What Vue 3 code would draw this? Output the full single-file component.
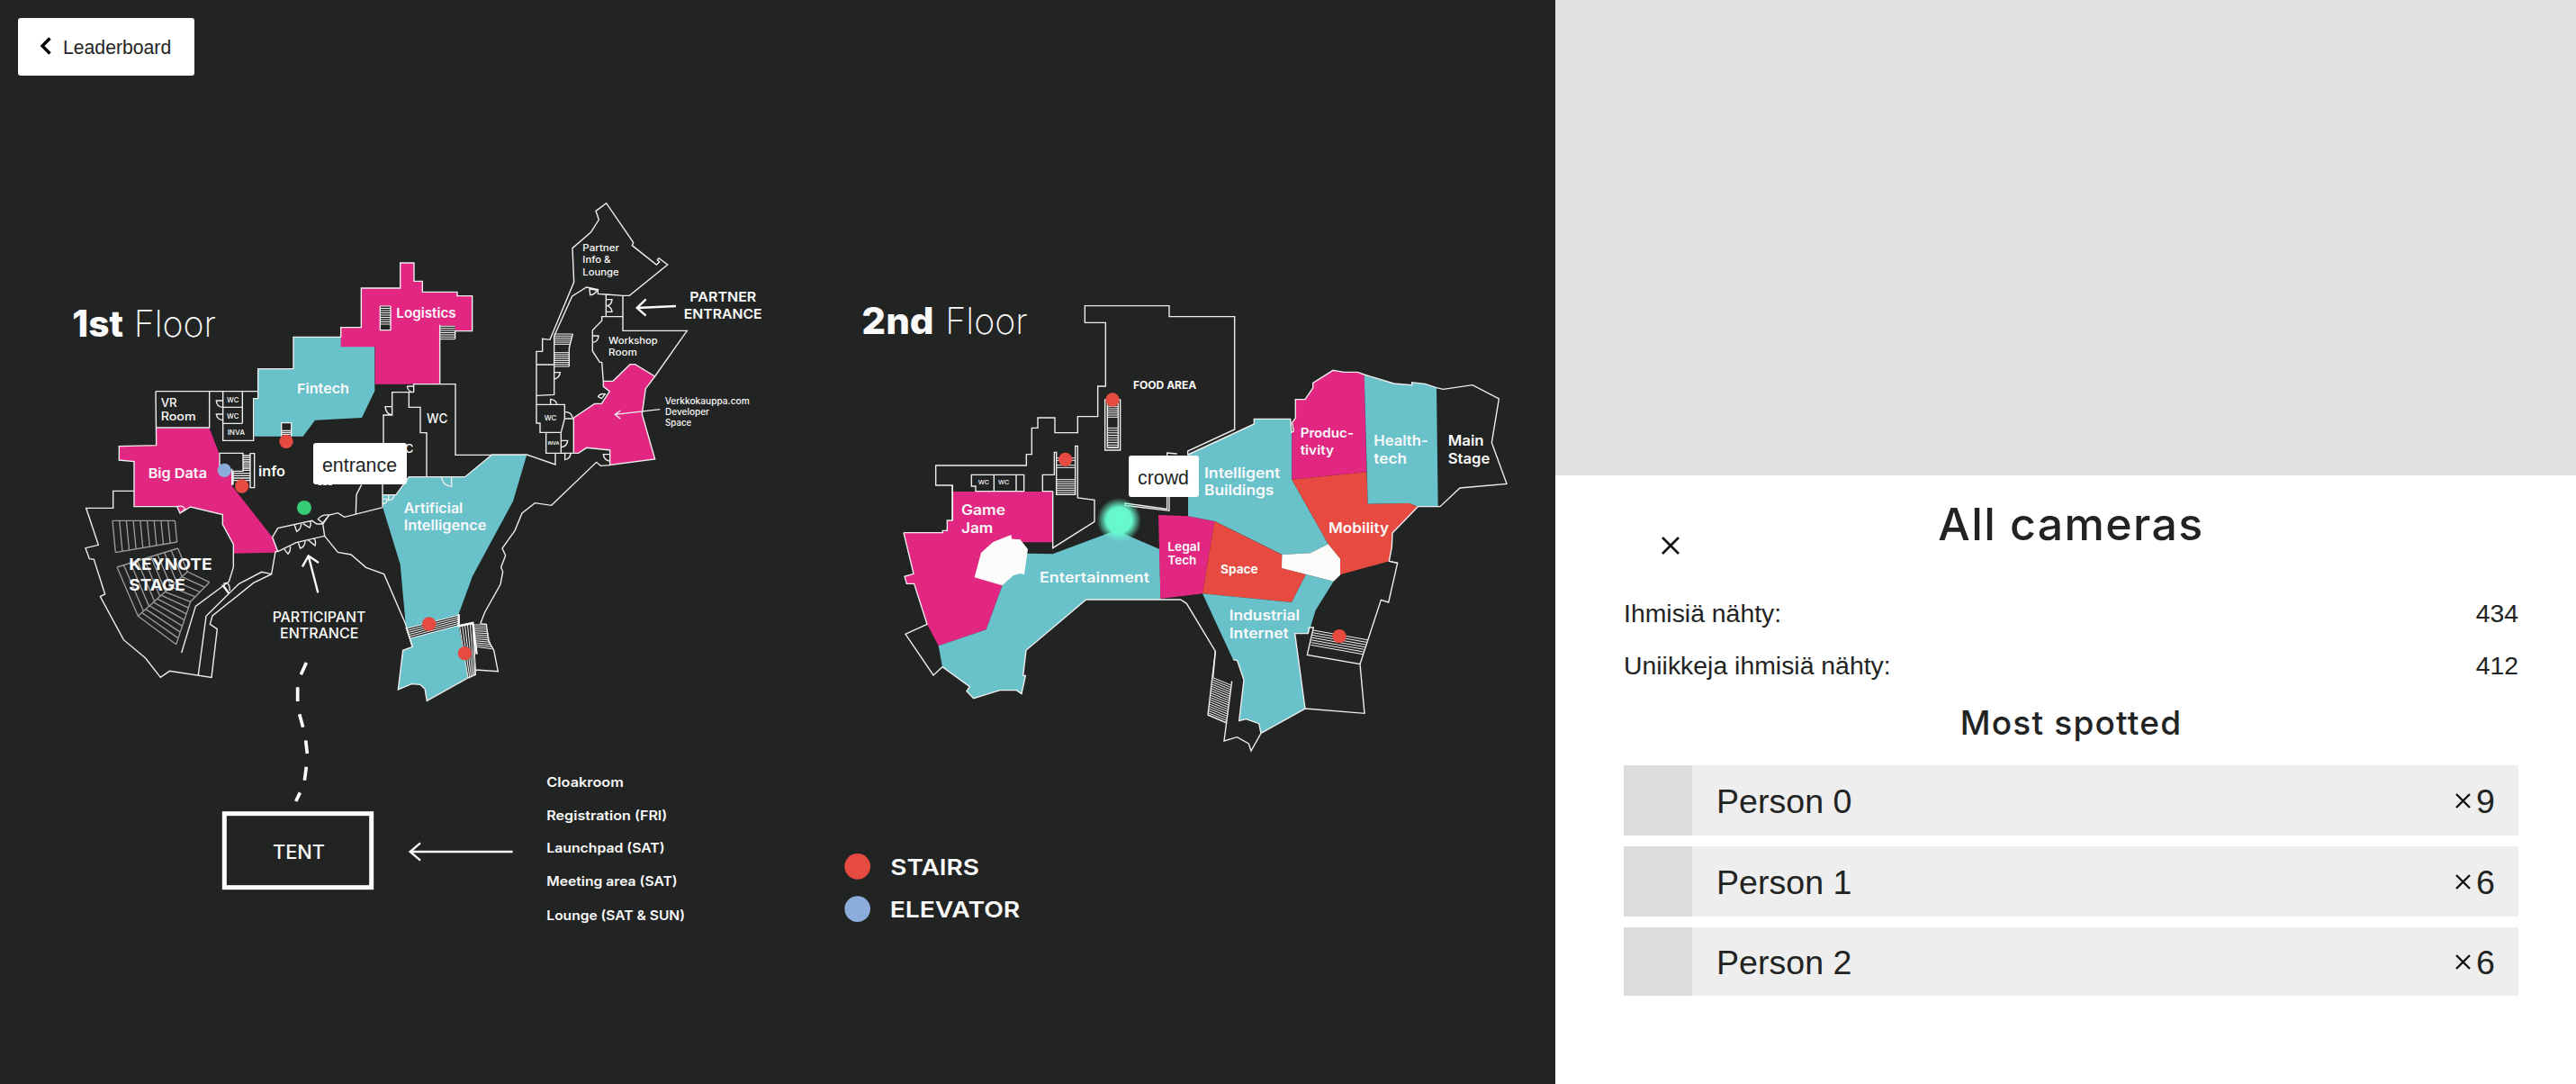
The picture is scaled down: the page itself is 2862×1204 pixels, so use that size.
<template>
  <div class="app">
    <section class="map-pane">
      <svg class="map" viewBox="0 0 5184 3612" xmlns="http://www.w3.org/2000/svg">
        <defs>
          <radialGradient id="glow">
            <stop offset="0" stop-color="#68fcd0" />
            <stop offset="0.58" stop-color="#68fcd0" stop-opacity="0.97" />
            <stop offset="0.8" stop-color="#68fcd0" stop-opacity="0.45" />
            <stop offset="1" stop-color="#68fcd0" stop-opacity="0" />
          </radialGradient>
        </defs>

        <g v-for="zone in zones" :key="zone.name" :transform="`translate(${zone.x} ${zone.y})`">
          <polygon v-for="(area, i) in zone.areas" :key="i" :points="area[1]" :class="area[0]" />
        </g>

        <g v-for="zone in zones" :key="zone.name" :transform="`translate(${zone.x} ${zone.y})`">
          <path class="hatch" :class="zone.hatchClass" :d="zone.hatches.map(hatch).join('')" />
          <path class="wall" :d="zone.walls" />
          <path v-if="zone.thick" class="thick" :d="zone.thick" />
          <circle v-for="(dot, i) in zone.dots" :key="i" :class="dot[0]" :cx="dot[1]" :cy="dot[2]" :r="dot[3]" />
        </g>

        <!-- テント -->
        <path class="dashes" d="M1021 2208L1003 2248M992 2290V2337M998 2380L1010 2423M1019 2467L1024 2511M1021 2555L1015 2600M1000 2641L986 2670" />
        <rect class="tent" x="748" y="2711" width="490" height="246" />
        <path class="thick" d="M1709 2838H1367M1401 2809L1367 2838L1401 2867" />

        <g v-for="zone in zones" :key="zone.name" :transform="`translate(${zone.x} ${zone.y})`">
          <text
            v-for="(label, i) in zone.labels"
            :key="i"
            :class="label[5] || 'semi'"
            :x="label[1]"
            :y="label[2]"
            :textLength="label[3]"
            :font-size="label[4]"
            lengthAdjust="spacingAndGlyphs"
          >{{ label[0] }}</text>
        </g>

        <circle cx="3730" cy="1733" r="74" fill="url(#glow)" />
      </svg>

      <button class="back-button">
        <svg width="14" height="20" viewBox="0 0 14 20">
          <path d="M11.5 1.5L3 10L11.5 18.5" fill="none" stroke="#000" stroke-width="3.4" />
        </svg>
        <span>Leaderboard</span>
      </button>
      <div class="camera-label entrance">entrance</div>
      <div class="camera-label crowd">crowd</div>
    </section>

    <aside class="side">
      <div class="video"></div>
      <div class="panel">
        <div class="panel-header">
          <button class="close-button">
            <svg width="20" height="20" viewBox="0 0 20 20">
              <path d="M1 1L19 19M19 1L1 19" stroke="#111" stroke-width="2.6" />
            </svg>
          </button>
          <h1>All cameras</h1>
        </div>
        <div v-for="stat in stats" :key="stat.label" class="stat">
          <span>{{ stat.label }}</span>
          <span>{{ stat.value }}</span>
        </div>
        <h2>Most spotted</h2>
        <ul class="people">
          <li v-for="person in people" :key="person.name">
            <div class="avatar"></div>
            <span class="name">{{ person.name }}</span>
            <svg width="17" height="17" viewBox="0 0 17 17">
              <path d="M1 1L16 16M16 1L1 16" stroke="#111" stroke-width="2.4" />
            </svg>
            <span class="count">{{ person.count }}</span>
          </li>
        </ul>
      </div>
    </aside>
  </div>
</template>

<script setup>
import { ref } from 'vue'

const stats = ref([
  { label: 'Ihmisiä nähty:', value: 434 },
  { label: 'Uniikkeja ihmisiä nähty:', value: 412 }
])

const people = ref([
  { name: 'Person 0', count: 9 },
  { name: 'Person 1', count: 6 },
  { name: 'Person 2', count: 6 }
])

// Lines between edge a-b and edge c-d, n steps
const hatch = ([ax, ay, bx, by, cx, cy, dx, dy, n]) => {
  let d = ''
  for (let i = 0; i <= n; i++) {
    const t = i / n
    d += `M${ax + (bx - ax) * t} ${ay + (by - ay) * t}L${cx + (dx - cx) * t} ${cy + (dy - cy) * t}`
  }
  return d
}

// areas: [class, points]
// hatches: [ax, ay, bx, by, cx, cy, dx, dy, steps]
// dots: [class, x, y, r]
// labels: [text, x, y, width, size, class]
const zones = [
  {
    name: 'keynote',
    x: 240,
    y: 1200,
    hatchClass: 'seats',
    areas: [
      ['teal', '738,-77 897,-77 897,-45 1009,-45 1009,103 966,192 810,200 770,254 607,254 607,128 620,128 620,29 738,29'],
      ['pink', '281,227 458,227 490,310 492,365 532,365 532,418 668,590 686,638 678,641 538,644 538,614 502,548 502,515 395,489 360,510 350,488 207,488 207,338 157,333 157,287 281,284'],
      ['dark', '698,209 731,209 731,254 698,254']
    ],
    hatches: [
      [135, 535, 343, 535, 145, 641, 350, 606, 9],
      [135, 535, 145, 641, 343, 535, 350, 606, 1],
      [150, 690, 353, 627, 220, 853, 385, 705, 9],
      [150, 690, 220, 853, 353, 627, 385, 705, 1],
      [385, 705, 310, 772, 458, 740, 395, 805, 4],
      [310, 772, 220, 853, 395, 805, 347, 947, 7],
      [458, 740, 395, 805, 395, 805, 347, 947, 1]
    ],
    walls:
      'M897 -77H738V29H620V128H605V268H503V104M279 104H620M279 225H458V104M279 104L281 284L157 287V333L207 338V488H350L360 510L395 489L502 515V548L538 614V690L523 738' +
      'M207 436H137V493H47L88 616L45 626L58 662L73 664L110 780L94 788L172 932L245 993L295 1057L325 1036L465 1057L484 896L460 880L468 852L605 742L665 713L678 638H686L668 590L686 560L800 535L816 546H836L857 516L886 509L908 523L1035 491' +
      'M523 738L412 820L365 975M523 778L447 853L421 1048M523 778L557 745L632 706L665 713M500 748L523 778' +
      'M836 546L842 586L747 608L686 638M842 586L886 640L930 648L980 691L1040 713L1112 880L1135 957' +
      'M568 104V211M503 157H568M503 211H568M503 135H481Q482 156 503 157M503 200Q483 198 481 180H503' +
      'M698 254V209H731V254M698 235H731M698 241H731M698 247H731' +
      'M492 365V310H570V370H537V415M533 362V418M594 311H608V425H594ZM570 318H593M570 325H593M570 332H593M570 339H593M570 346H593M570 353H593M570 360H593M570 367H593M537 377H593M537 385H593M537 393H593M537 401H593' +
      'M742 550L749 571Q762 565 764 546M770 545L792 558Q798 548 794 538M820 530Q832 513 857 516L836 543ZM707 629L720 646Q730 635 727 621M754 608L761 627Q776 622 777 603M788 600L810 618Q814 605 808 596' +
      'M352 488Q370 482 377 497L360 510M505 745Q525 735 526 768M946 512L948 448L965 415M821 415h12m4 0h13m4 0h13',
    thick: 'M820 775L788 652M768 688L788 652L822 675M503 750L522 776',
    dots: [
      ['red', 714, 271, 23],
      ['blue', 508, 367, 23],
      ['red', 566, 420, 23],
      ['green', 774, 492, 24]
    ],
    labels: [
      ['VR', 296, 155, 54, 38, 'medium'],
      ['Room', 296, 200, 117, 38, 'medium'],
      ['WC', 516, 140, 40, 24, 'medium'],
      ['WC', 516, 195, 40, 24, 'medium'],
      ['INVA', 518, 249, 58, 23, 'medium'],
      ['Fintech', 750, 110, 174, 45],
      ['Big Data', 254, 394, 196, 45],
      ['info', 621, 387, 90, 45],
      ['KEYNOTE', 190, 698, 277, 52, 'bold'],
      ['STAGE', 190, 768, 187, 52, 'bold'],
      ['PARTICIPANT', 668, 872, 311, 46, 'medium'],
      ['ENTRANCE', 693, 928, 262, 46, 'medium']
    ]
  },
  {
    name: 'logistics',
    x: 1080,
    y: 810,
    areas: [
      ['pink', '56,281 124,281 124,150 254,150 254,66 300,66 300,127 328,127 328,163 444,163 444,176 494,176 494,293 386,293 386,470 170,470 170,346 56,346'],
      ['dark', '187,210 222,210 222,290 187,290'],
      ['dark', '386,275 437,275 437,320 386,320']
    ],
    hatches: [
      [187, 210, 187, 270, 222, 210, 222, 270, 8],
      [386, 277, 386, 320, 437, 277, 437, 320, 6]
    ],
    walls:
      'M56 313V281H124V150H254V66H300V127H328V163H444V176H494V293H437V320M386 272V470M187 210V290H222V210' +
      'M299 497V470H438V706H560M299 497H227V573H198V780M283 497V547H321V632H342V778' +
      'M277 477Q280 497 299 497M277 477H299M227 545H204Q206 570 227 573',
    dots: [],
    labels: [
      ['Logistics', 241, 248, 199, 45],
      ['WC', 342, 601, 70, 43, 'medium'],
      ['WC', 230, 698, 68, 39, 'medium']
    ]
  },
  {
    name: 'ai',
    x: 1080,
    y: 1470,
    areas: [
      ['teal', '283,119 470,119 560,45 676,45 630,200 495,450 449,575 449,615 480,787 343,865 336,825 320,811 292,809 247,828 263,697 295,685 273,620 254,410 195,218 195,179 240,179'],
      ['dark', '273,625 449,580 449,612 288,657'],
      ['dark', '452,617 496,607 505,778 480,788']
    ],
    hatches: [
      [273, 625, 288, 657, 449, 580, 449, 614, 5],
      [452, 617, 496, 607, 480, 788, 505, 778, 5],
      [496, 612, 508, 685, 541, 612, 560, 692, 11]
    ],
    walls:
      'M195 120V218M195 179H240L283 119H470L560 45H676L771 78V40' +
      'M273 620L295 685L263 697L247 828L292 809L320 811L336 825L343 865L480 789L505 778L496 605L449 615V577' +
      'M521 608L541 610L548 665L566 697L580 767L505 762M521 608L536 570L588 477L596 435L590 420L605 381L594 357L636 298L660 240L703 206L758 214L908 70L922 82L953 80' +
      'M425 119V151Q395 148 391 119M195 209Q212 207 210 193H197M215 181V197Q232 195 234 181',
    thick: 'M449 577V616L496 606L509 710',
    dots: [
      ['red', 350, 609, 23],
      ['red', 469, 707, 23]
    ],
    labels: [
      ['Artificial', 266, 240, 197, 46],
      ['Intelligence', 266, 296, 275, 46]
    ]
  },
  {
    name: 'partner',
    x: 1680,
    y: 630,
    areas: [
      ['pink', '503,624 472,665 460,750 503,900 353,919 353,870 275,862 248,880 232,880 232,762 302,715 325,715 352,674 331,658 331,640 363,640 420,584 437,584']
    ],
    hatches: [
      [167, 483, 167, 517, 229, 483, 219, 517, 5],
      [167, 545, 167, 591, 217, 545, 217, 591, 7]
    ],
    walls:
      'M167 490L227 357L275 327L313 335V349L340 351L396 355H418L545 252L516 230L511 236L518 243L508 252L427 188L431 178L341 47L306 73L316 102L290 143L228 197L233 310L153 502L128 499V541H108V780H120V811H190L202 765V718H108' +
      'M396 355V472H610L503 624L472 665L460 750L503 900L353 919V870L275 862L248 880H140V813M232 880V762L302 715H325L352 674L331 658V640H363L420 584H437L503 624' +
      'M340 351V425H396M340 425H326V439L295 470V540L319 577H326L331 640M108 585H167M167 490V685L108 688M232 765H202M190 811V880' +
      'M285 333L287 353Q303 352 310 337ZM340 368H360Q358 388 343 389Q358 393 360 409H340M295 489H315Q313 510 295 511M167 611H187Q185 630 167 633M155 718V700Q173 702 177 718M202 742Q225 742 228 762' +
      'M190 838H212Q210 858 190 860M203 880V902Q220 900 222 880M353 884H331Q333 903 353 907M325 698L337 683Q318 680 314 692ZM229 483L217 530V591' +
      'M520 734L370 751M388 738L370 751L388 766',
    thick: 'M573 390L443 396M473 367L443 396L473 422',
    dots: [],
    labels: [
      ['Partner', 262, 208, 122, 30, 'medium'],
      ['Info &', 262, 247, 93, 30, 'medium'],
      ['Lounge', 262, 287, 121, 30, 'medium'],
      ['PARTNER', 619, 376, 222, 45],
      ['ENTRANCE', 599, 432, 261, 45],
      ['Workshop', 348, 515, 164, 30, 'medium'],
      ['Room', 348, 555, 96, 30, 'medium'],
      ['Verkkokauppa.com', 536, 718, 282, 29, 'medium'],
      ['Developer', 537, 753, 147, 29, 'medium'],
      ['Space', 537, 788, 88, 29, 'medium'],
      ['WC', 134, 771, 41, 24, 'medium'],
      ['INVA', 146, 852, 38, 13]
    ]
  },
  {
    name: 'food',
    x: 2760,
    y: 960,
    areas: [],
    hatches: [
      [761, 566, 761, 574, 824, 566, 824, 574, 1],
      [761, 590, 761, 598, 824, 590, 824, 598, 1],
      [761, 638, 761, 688, 824, 638, 824, 688, 7],
      [931, 395, 931, 430, 967, 395, 967, 430, 5],
      [931, 466, 931, 531, 967, 466, 967, 531, 8]
    ],
    walls:
      'M1199 557V543L1355 471V95H1137V59H856V115H925V327H899V428H832V482H756V432H699V466H679V554H661V591H359V657H414V774H397V808H382V815H252' +
      'M478 622H653V677H492V660H478ZM553 622V677M627 622V677' +
      'M749 677H715V622H754V547H761V688H824V526H832V699L888 706V778L749 866V677' +
      'M923 372V540H974V372H967V531H931V372Z' +
      'M1130 560V549L1163 552M1130 690V736L990 717V724L1137 742V690',
    dots: [
      ['red', 791, 571, 23],
      ['red', 948, 372, 23]
    ],
    labels: [
      ['WC', 500, 654, 37, 20, 'medium'],
      ['WC', 567, 654, 37, 20, 'medium'],
      ['FOOD AREA', 1017, 335, 211, 34, 'bold']
    ]
  },
  {
    name: 'entertainment',
    x: 2940,
    y: 1590,
    areas: [
      ['pink', '235,48 569,48 569,217 400,217 400,362 347,508 188,562 150,490 107,355 82,355 75,331 105,322 72,185 202,185 202,178 217,178 217,145 235,145'],
      ['teal', '401,360 347,508 188,562 201,632 292,698 282,713 305,737 393,710 448,710 465,722 478,661 470,661 480,577 680,408 928,408 925,240 780,177 569,256 484,254 440,320'],
      ['white', '308,334 330,252 370,216 430,192 433,206 460,207 486,240 474,324 460,321 437,328 401,361'],
      ['pink', '921,126 1020,130 1108,147 1068,388 928,405']
    ],
    hatches: [],
    walls:
      'M235 145V27M72 185L105 322L75 331L82 355H107L150 490L78 523L171 660L201 632L292 698L282 713L305 737L393 710H448L465 722L478 661H470L480 577L680 408H995L1015 421L1111 580L1103 668',
    dots: [],
    labels: [
      ['Game', 264, 126, 147, 48],
      ['Jam', 264, 185, 106, 48],
      ['Entertainment', 525, 352, 366, 48],
      ['Legal', 952, 245, 108, 40],
      ['Tech', 952, 291, 96, 40]
    ]
  },
  {
    name: 'health',
    x: 3840,
    y: 1140,
    areas: [
      ['teal', '120,373 340,273 340,256 461,256 466,300 466,458 587,673 527,703 433,708 209,597 120,580'],
      ['pink', '466,458 466,300 472,297 467,268 478,253 478,191 510,191 536,153 536,136 603,94 640,100 685,100 707,108 715,433'],
      ['red', '466,458 715,433 719,539 858,537 886,548 801,636 799,683 790,730 627,775 627,722 587,673'],
      ['teal', '707,108 806,138 866,143 866,134 910,139 948,152 953,548 886,548 858,537 719,539']
    ],
    hatches: [],
    walls:
      'M120 375L340 273V256H461L465 301L472 297L467 268L478 253V191H510L536 153V136L603 94L640 100H685L707 108L806 138L866 143V134L910 139L948 152L970 157L1068 143L1156 189L1132 335L1182 472L1026 486L960 548H886L801 636L799 683L790 730L818 736',
    dots: [],
    labels: [
      ['Intelligent', 174, 452, 253, 48],
      ['Buildings', 174, 511, 232, 48],
      ['Produc-', 494, 319, 178, 44],
      ['tivity', 494, 374, 112, 44],
      ['Health-', 739, 346, 181, 48],
      ['tech', 739, 405, 110, 48],
      ['Main', 986, 346, 120, 48],
      ['Stage', 986, 405, 140, 48],
      ['Mobility', 588, 636, 201, 48],
      ['Space', 228, 770, 125, 39, 'bold']
    ]
  },
  {
    name: 'industrial',
    x: 3780,
    y: 1800,
    areas: [
      ['red', '268,-63 492,48 492,93 573,114 525,207 228,178'],
      ['teal', '228,178 525,207 573,114 665,137 605,233 582,310 536,311 570,561 423,643 416,611 373,596 350,602 366,466 344,401 330,398'],
      ['white', '493,48 587,43 647,13 687,62 687,116 665,137 492,93']
    ],
    hatches: [
      [263, 458, 247, 583, 323, 483, 307, 608, 17],
      [597, 300, 589, 349, 777, 332, 762, 380, 6]
    ],
    walls:
      'M330 398L344 401L366 466L350 602L373 596L416 611L423 643L570 561L536 311H580L583 291H598L577 382L753 413L768 577L570 561M850 70L878 76L848 207L823 199L753 413' +
      'M423 643L390 702L382 678L343 656L300 669L326 470M271 370L246 582L306 608',
    dots: [['red', 684, 320, 23]],
    labels: [
      ['Industrial', 317, 268, 235, 48],
      ['Internet', 317, 328, 198, 48]
    ]
  },
  {
    name: 'legend',
    x: 0,
    y: 0,
    areas: [],
    hatches: [],
    walls: '',
    dots: [
      ['red', 2858, 2887, 43],
      ['blue', 2858, 3029, 43]
    ],
    labels: [
      ['1st', 241, 1121, 170, 122, 'heavy'],
      ['Floor', 446, 1121, 274, 122, 'thin'],
      ['2nd', 2872, 1112, 241, 122, 'heavy'],
      ['Floor', 3151, 1112, 274, 122, 'thin'],
      ['TENT', 909, 2861, 174, 64, 'medium'],
      ['Cloakroom', 1822, 2623, 257, 44],
      ['Registration (FRI)', 1822, 2733, 402, 44],
      ['Launchpad (SAT)', 1822, 2841, 394, 44],
      ['Meeting area (SAT)', 1822, 2953, 436, 44],
      ['Lounge (SAT & SUN)', 1822, 3065, 461, 44],
      ['STAIRS', 2968, 2916, 296, 74],
      ['ELEVATOR', 2966, 3058, 434, 74]
    ]
  }
]
</script>

<style>
body {
  background-color: #fff;
}
</style>

<style scoped>
.app {
  display: flex;
  width: 100vw;
  height: 100vh;
  overflow: hidden;
  font-family: "Helvetica Neue", "Liberation Sans", Arial, sans-serif;
  color: #222423;
}

/* マップ */
.map-pane {
  position: relative;
  width: 1728px;
  flex: none;
  background-color: #222423;
}

.map {
  display: block;
  width: 1728px;
  height: 1204px;
}

.map text {
  fill: #fafafa;
  font-family: Inter, sans-serif;
}

.semi {
  font-weight: 600;
}

.medium {
  font-weight: 500;
}

.bold {
  font-weight: 700;
}

.heavy {
  font-weight: 800;
}

.thin {
  font-weight: 200;
}

.teal {
  fill: #69c1ca;
}

.pink {
  fill: #e22782;
}

.red {
  fill: #e74a40;
}

.blue {
  fill: #8cacdb;
}

.green {
  fill: #38cc74;
}

.white {
  fill: #fcfcfa;
}

.dark {
  fill: #222423;
}

.wall,
.hatch,
.thick,
.dashes,
.tent {
  fill: none;
  stroke: #ededed;
  stroke-width: 4.2;
}

.hatch {
  stroke: #f4f4f4;
  stroke-width: 3;
}

.seats {
  stroke: #9b9b9b;
  stroke-width: 4;
}

.thick {
  stroke: #fcfcfa;
  stroke-width: 7;
}

.dashes {
  stroke: #fcfcfa;
  stroke-width: 11;
}

.tent {
  stroke: #fcfcfa;
  stroke-width: 15;
}

button {
  background: none;
  border: none;
  padding: 0;
  font-family: inherit;
  color: inherit;
  cursor: pointer;
}

.back-button {
  position: absolute;
  top: 20px;
  left: 20px;
  width: 196px;
  height: 64px;
  padding: 1px 0 0 24px;
  display: flex;
  align-items: center;
  gap: 12px;
  background-color: #fff;
  border-radius: 3px;
  font-size: 21.2px;
}

.back-button svg {
  margin-bottom: 4px;
}

.camera-label {
  position: absolute;
  height: 46px;
  padding: 0 10px;
  line-height: 50px;
  background-color: #fff;
  border-radius: 3px;
  font-size: 21.33px;
}

.entrance {
  top: 492px;
  left: 348px;
  width: 84px;
}

.crowd {
  top: 506px;
  left: 1254px;
  width: 58px;
}

/* サイドパネル */
.side {
  flex: 1;
  display: flex;
  flex-direction: column;
  background-color: #fff;
}

.video {
  height: 528px;
  flex: none;
  background-color: #e2e2e2;
}

.panel {
  padding: 0 64px 0 76px;
}

.panel-header {
  display: grid;
  grid-template-columns: 104px 1fr 104px;
  height: 124px;
}

.close-button {
  height: 156px;
  display: flex;
  align-items: center;
  justify-content: center;
}

h1,
h2 {
  margin: 0;
  font-family: Inter, sans-serif;
  font-weight: 500;
  text-align: center;
}

h1 {
  font-size: 50px;
  line-height: 109px;
  letter-spacing: 1.4px;
  white-space: nowrap;
}

.stat {
  display: flex;
  justify-content: space-between;
  height: 58px;
  line-height: 58px;
  font-size: 28.4px;
}

h2 {
  font-size: 37px;
  line-height: 70px;
  height: 82px;
  letter-spacing: 1.2px;
}

.people {
  list-style: none;
  margin: 0;
  padding: 0;
  display: flex;
  flex-direction: column;
  gap: 12px;
}

.people li {
  display: flex;
  align-items: center;
  height: 78px;
  padding-right: 26px;
  background-color: #eee;
  font-size: 37.6px;
}

.people li:last-child {
  height: 76px;
}

.avatar {
  width: 76px;
  height: 100%;
  background-color: #dcdcdc;
}

.name {
  flex: 1;
  padding: 3px 0 0 27px;
}

.count {
  padding: 3px 0 0 6px;
}
</style>
